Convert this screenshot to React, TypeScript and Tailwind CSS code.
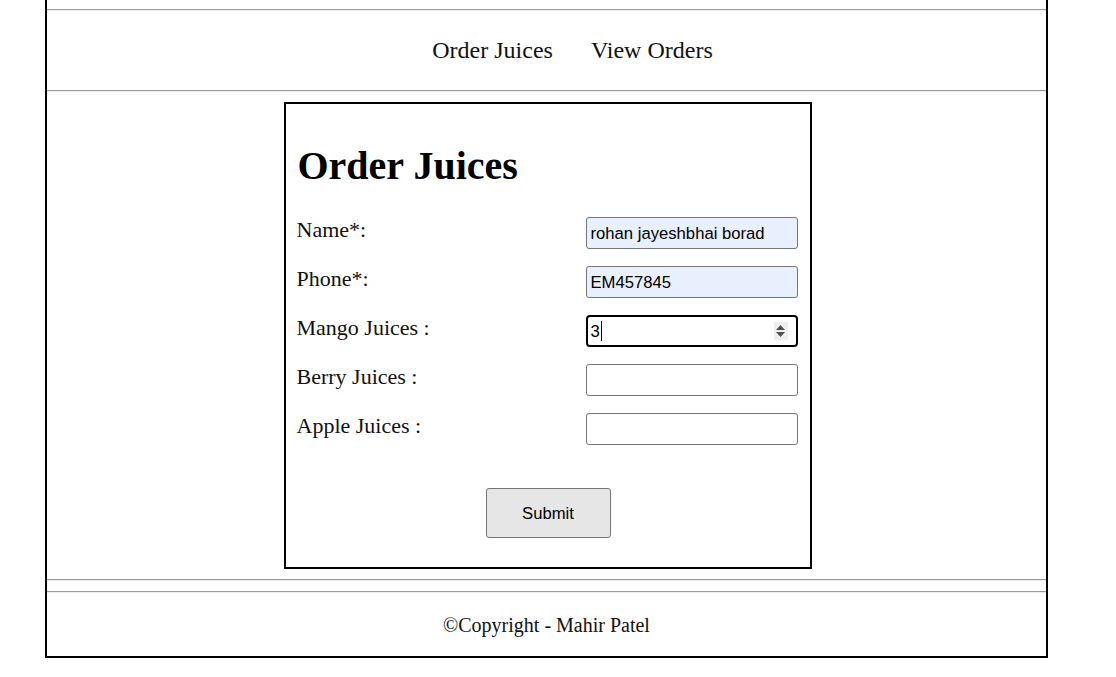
import React from "react";

const serif = { fontFamily: '"Liberation Serif", "Times New Roman", serif' };
const sans = { fontFamily: '"Liberation Sans", Arial, sans-serif' };

function Hr() {
  return <div className="h-0 border-t border-b border-t-[#9a9a9a] border-b-[#eeeeee]" />;
}

function Row({ label, children, last }: { label: string; children: React.ReactNode; last?: boolean }) {
  return (
    <div className={`flex items-start justify-between ${last ? "" : "mb-[17px]"}`}>
      <div className="text-[22px] leading-[25px] text-[#111]" style={serif}>
        {label}
      </div>
      {children}
    </div>
  );
}

function TextBox({ value, autofill }: { value?: string; autofill?: boolean }) {
  return (
    <div
      className={`w-[212px] h-[32px] border border-[#767676] rounded-[3px] flex items-center pl-[4px] text-[16.67px] text-black ${
        autofill ? "bg-[#e8f0fe]" : "bg-white"
      }`}
      style={sans}
    >
      {value}
    </div>
  );
}

function FocusedNumber() {
  return (
    <div
      className="w-[212px] h-[32px] border-2 border-black rounded-[4px] flex items-center pl-[3px] pr-[8px] text-[16.67px] text-black bg-white"
      style={sans}
    >
      <span>3</span>
      <span className="w-px h-[20px] bg-black ml-px" />
      <div className="ml-auto w-[14px] h-[18px] bg-[#efefef] flex flex-col items-center justify-center gap-[2px]">
        <svg width="9" height="5" viewBox="0 0 9 5">
          <path d="M0 5 L4.5 0 L9 5 Z" fill="#505050" />
        </svg>
        <svg width="9" height="5" viewBox="0 0 9 5">
          <path d="M0 0 L9 0 L4.5 5 Z" fill="#505050" />
        </svg>
      </div>
    </div>
  );
}

export default function App() {
  return (
    <div className="w-[1116px] h-[677px] overflow-hidden bg-white">
      <div className="ml-[45px] mt-[-2px] w-[1003px] border-2 border-black pt-[9px]">
        <Hr />
        <nav className="h-[79px] flex items-center justify-center pl-[52px] pb-[2px] gap-[38px] text-[24px] text-[#111]" style={serif}>
          <span>Order Juices</span>
          <span>View Orders</span>
        </nav>
        <Hr />
        <div className="flex justify-center pl-[2px] pt-[10px] pb-[10px]">
          <div className="w-[528px] border-2 border-black pl-[11px] pt-[39px] pb-[29px] pr-[12px]">
            <h1 className="text-[40px] leading-[46px] font-bold text-black mb-[28px] pl-px" style={serif}>
              Order Juices
            </h1>
            <Row label="Name*:">
              <TextBox value="rohan jayeshbhai borad" autofill />
            </Row>
            <Row label="Phone*:">
              <TextBox value="EM457845" autofill />
            </Row>
            <Row label="Mango Juices :">
              <FocusedNumber />
            </Row>
            <Row label="Berry Juices :">
              <TextBox />
            </Row>
            <Row label="Apple Juices :" last>
              <TextBox />
            </Row>
            <div className="flex justify-center mt-[43px] pl-[2px]">
              <button
                className="w-[125px] h-[50px] bg-[#e6e6e6] border border-[#767676] rounded-[3px] text-[16.67px] text-black"
                style={sans}
              >
                Submit
              </button>
            </div>
          </div>
        </div>
        <Hr />
        <div className="h-[10px]" />
        <Hr />
        <footer className="h-[63px] flex items-center justify-center text-[20px] text-[#111]" style={serif}>
          ©Copyright - Mahir Patel
        </footer>
      </div>
    </div>
  );
}
